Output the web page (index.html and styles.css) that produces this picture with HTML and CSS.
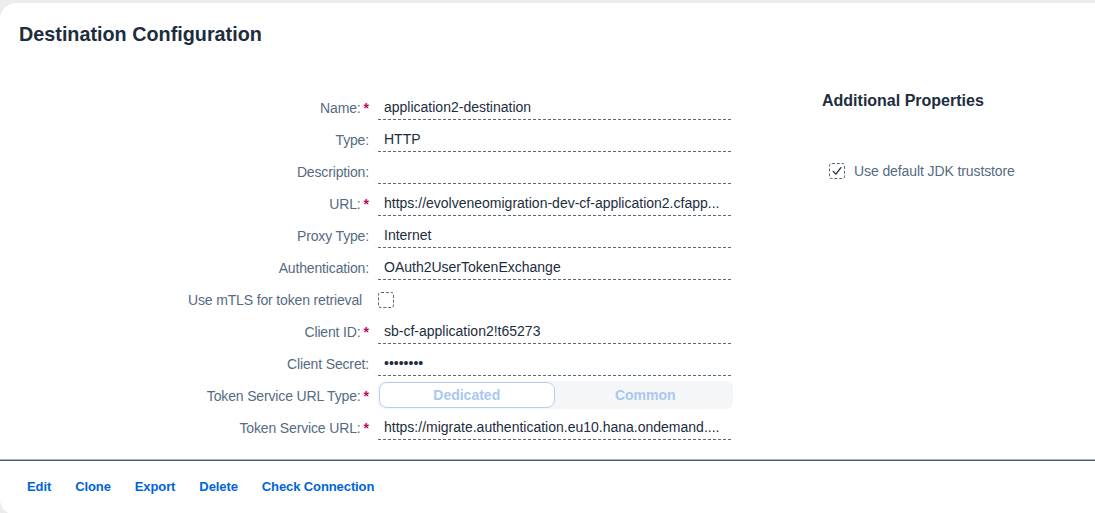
FILE: index.html
```html
<!DOCTYPE html>
<html lang="en">
<head>
<meta charset="utf-8">
<title>Destination Configuration</title>
<link rel="stylesheet" href="styles.css">
</head>
<body>
<div class="card">
  <header class="card-header">
    <h1 class="title">Destination Configuration</h1>
  </header>
  <section class="content">
    <div class="form">
      <div class="label">Name:<span class="req">*</span></div>
      <div class="value">application2-destination</div>

      <div class="label">Type:</div>
      <div class="value">HTTP</div>

      <div class="label">Description:</div>
      <div class="value"></div>

      <div class="label">URL:<span class="req">*</span></div>
      <div class="value">https://evolveneomigration-dev-cf-application2.cfapp...</div>

      <div class="label">Proxy Type:</div>
      <div class="value">Internet</div>

      <div class="label">Authentication:</div>
      <div class="value">OAuth2UserTokenExchange</div>

      <div class="label label-plain">Use mTLS for token retrieval</div>
      <div class="value-check"><span class="checkbox"></span></div>

      <div class="label">Client ID:<span class="req">*</span></div>
      <div class="value">sb-cf-application2!t65273</div>

      <div class="label">Client Secret:</div>
      <div class="value secret">••••••••</div>

      <div class="label">Token Service URL Type:<span class="req">*</span></div>
      <div class="segmented">
        <div class="seg seg-selected">Dedicated</div>
        <div class="seg">Common</div>
      </div>

      <div class="label">Token Service URL:<span class="req">*</span></div>
      <div class="value">https://migrate.authentication.eu10.hana.ondemand....</div>
    </div>
    <aside class="side">
      <h2 class="side-title">Additional Properties</h2>
      <div class="side-check">
        <span class="checkbox checked"><svg viewBox="0 0 16 16" width="16" height="16"><path d="M4.2 8.4 L6.9 11.1 L11.9 4.6" fill="none" stroke="#1d2d3e" stroke-width="1.3" stroke-linecap="round" stroke-linejoin="round"/></svg></span>
        <span class="side-label">Use default JDK truststore</span>
      </div>
    </aside>
  </section>
  <footer class="footer">
    <a class="action">Edit</a>
    <a class="action">Clone</a>
    <a class="action">Export</a>
    <a class="action">Delete</a>
    <a class="action">Check Connection</a>
  </footer>
</div>
</body>
</html>
```
FILE: styles.css
```css
html, body {
  margin: 0;
  padding: 0;
}
body {
  background: #eaecee;
  font-family: "Liberation Sans", Arial, sans-serif;
  overflow: hidden;
  height: 513px;
}
.card {
  margin-top: 3px;
  width: 1120px;
  height: 512px;
  background: #ffffff;
  border-radius: 16px;
  box-sizing: border-box;
  display: flex;
  flex-direction: column;
}
.card-header {
  padding: 21px 19px 0;
}
.title {
  margin: 0;
  font-size: 19.8px;
  line-height: 20px;
  font-weight: bold;
  color: #1d2d3e;
}
.content {
  display: flex;
  margin-top: 47px;
}
.form {
  display: grid;
  grid-template-columns: 369px 355px;
  grid-auto-rows: 32px;
  column-gap: 9px;
}
.label {
  font-size: 14px;
  color: #556b82;
  text-align: right;
  line-height: 32px;
  padding-top: 1px;
  white-space: nowrap;
  letter-spacing: -0.15px;
}
.label-plain {
  padding-right: 7px;
}
.req {
  color: #ba066c;
  font-weight: bold;
  margin-left: 3px;
  letter-spacing: 0;
}
.value {
  margin-top: 3px;
  height: 26px;
  box-sizing: border-box;
  border-bottom: 1px dashed #556b82;
  padding-left: 6px;
  font-size: 14px;
  line-height: 27px;
  color: #1d2d3e;
  white-space: nowrap;
  overflow: hidden;
  margin-right: 2px;
}
.secret {
  font-size: 14px;
}
.value-check {
  display: flex;
  align-items: center;
  padding-top: 1px;
}
.checkbox {
  display: inline-flex;
  width: 16px;
  height: 16px;
  box-sizing: border-box;
  border: 1px dashed #556b82;
  border-radius: 3px;
  align-items: center;
  justify-content: center;
}
.checkbox svg {
  display: block;
  flex: none;
}
.segmented {
  margin-top: 2px;
  height: 28px;
  background: #f5f6f7;
  border-radius: 6px;
  display: flex;
  padding: 1px;
  box-sizing: border-box;
}
.seg {
  flex: 1;
  display: flex;
  align-items: center;
  justify-content: center;
  font-size: 14px;
  font-weight: bold;
  color: #a9c8f1;
  border-radius: 8px;
}
.seg-selected {
  background: #ffffff;
  border: 1px solid #b6cff0;
}
.seg + .seg {
  padding-left: 4px;
}
.side {
  margin-left: 89px;
}
.side-title {
  margin: 0;
  font-size: 16px;
  font-weight: bold;
  line-height: 20px;
  color: #1d2d3e;
  padding-top: 0;
}
.side-check {
  display: flex;
  align-items: center;
  margin-top: 52px;
  margin-left: 7px;
  gap: 9px;
}
.side-label {
  font-size: 14px;
  color: #556b82;
  letter-spacing: -0.1px;
}
.footer {
  margin-top: 16px;
  border-top: 1px solid #a9b4be;
  box-shadow: inset 0 1px 0 #475e75;
  display: flex;
  align-items: center;
  height: 52px;
  padding-left: 27px;
}
.action {
  font-size: 13px;
  font-weight: bold;
  color: #0064d9;
  margin-right: 24px;
  letter-spacing: -0.1px;
  cursor: pointer;
}
```
